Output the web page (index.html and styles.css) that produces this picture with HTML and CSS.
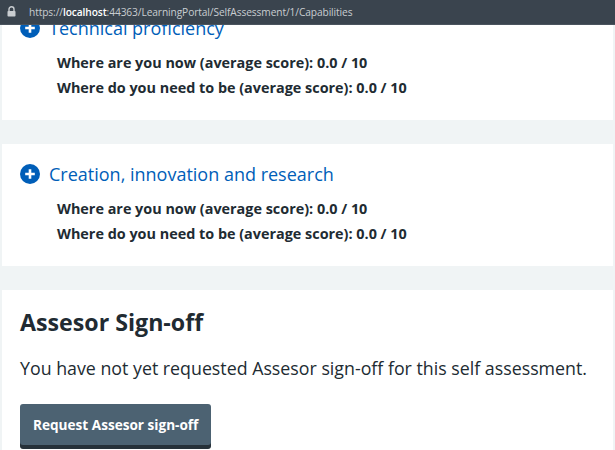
FILE: index.html
```html
<!DOCTYPE html>
<html lang="en">
<head>
<meta charset="utf-8">
<title>Capabilities</title>
<link rel="stylesheet" href="styles.css">
</head>
<body>
<div class="urlbar">
  <svg class="lock" width="9" height="11" viewBox="0 0 9 11" aria-hidden="true">
    <path d="M2 5V3.3a2.5 2.5 0 0 1 5 0V5" fill="none" stroke="#c9cdd1" stroke-width="1.4"/>
    <rect x="0.5" y="5" width="8" height="5.5" rx="0.8" fill="#c9cdd1"/>
  </svg>
  <span class="url">https://<b>localhost</b>:44363/LearningPortal/SelfAssessment/1/Capabilities</span>
</div>
<main class="page">
  <section class="card">
    <div class="cap-head">
      <svg class="plus" width="20" height="20" viewBox="0 0 20 20" aria-hidden="true">
        <circle cx="10" cy="10" r="10" fill="#005eb8"/>
        <path d="M10 5.2v9.6M5.2 10h9.6" stroke="#fff" stroke-width="2.6"/>
      </svg>
      <span class="cap-title">Technical proficiency</span>
    </div>
    <div class="scores">
      <p>Where are you now (average score): 0.0 / 10</p>
      <p>Where do you need to be (average score): 0.0 / 10</p>
    </div>
  </section>
  <section class="card">
    <div class="cap-head">
      <svg class="plus" width="20" height="20" viewBox="0 0 20 20" aria-hidden="true">
        <circle cx="10" cy="10" r="10" fill="#005eb8"/>
        <path d="M10 5.2v9.6M5.2 10h9.6" stroke="#fff" stroke-width="2.6"/>
      </svg>
      <span class="cap-title">Creation, innovation and research</span>
    </div>
    <div class="scores">
      <p>Where are you now (average score): 0.0 / 10</p>
      <p>Where do you need to be (average score): 0.0 / 10</p>
    </div>
  </section>
  <section class="card signoff">
    <h2>Assesor Sign-off</h2>
    <p class="lead">You have not yet requested Assesor sign-off for this self assessment.</p>
    <button class="btn" type="button">Request Assesor sign-off</button>
  </section>
</main>
</body>
</html>
```
FILE: styles.css
```css
html, body {
  margin: 0;
  padding: 0;
  background: #f0f4f5;
  color: #212b32;
  font-family: "Open Sans", "Noto Sans", sans-serif;
  overflow: hidden;
}

.urlbar {
  position: fixed;
  top: 0;
  left: 0;
  right: 0;
  height: 25px;
  background: #3a444e;
  border-bottom: 1px solid #4a545e;
  box-sizing: border-box;
  display: flex;
  align-items: center;
  gap: 13px;
  padding-left: 7px;
  z-index: 5;
}

.lock {
  display: block;
  margin-top: -2px;
}

.url {
  font-family: "Open Sans", sans-serif;
  font-size: 10.2px;
  color: #c9cdd1;
  letter-spacing: -0.1px;
}

.url b {
  color: #ffffff;
  font-weight: 600;
}

.page {
  display: flex;
  flex-direction: column;
  gap: 24px;
  padding: 0 2px;
  margin-top: -2px;
}

.card {
  background: #ffffff;
  padding: 16px 18px 20px;
}

.cap-head {
  display: flex;
  align-items: center;
  gap: 9px;
  height: 28px;
}

.plus {
  display: block;
  flex: none;
}

.cap-title {
  color: #005eb8;
  font-size: 18px;
  line-height: 28px;
}

.scores {
  margin-top: 8px;
  padding-left: 37px;
}

.scores p {
  margin: 0;
  font-size: 14.4px;
  font-weight: 700;
  line-height: 25px;
}

.signoff {
  padding-top: 16px;
  padding-bottom: 40px;
}

.signoff h2 {
  margin: 0;
  font-size: 23.2px;
  font-weight: 700;
  line-height: 32px;
}

.lead {
  margin: 16px 0 22px;
  font-size: 17.8px;
  line-height: 28px;
}

.btn {
  display: block;
  height: 41px;
  padding: 0 13px;
  border: 0;
  border-radius: 3px;
  background: #4c6272;
  box-shadow: 0 4px 0 #263139;
  color: #ffffff;
  font-family: "Open Sans", sans-serif;
  font-size: 13.6px;
  font-weight: 700;
}
```
